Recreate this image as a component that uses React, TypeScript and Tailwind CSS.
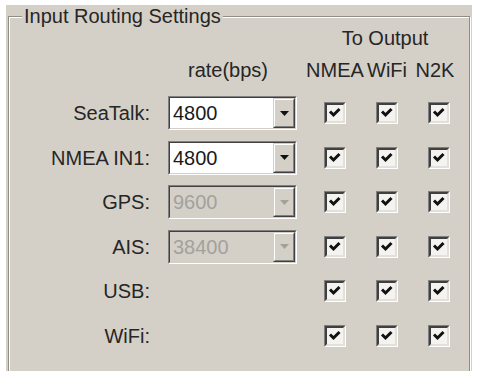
import React from 'react'

interface InputRow {
    name: string;
    rate?: string;
    enabled?: boolean;
}

const inputs: InputRow[] = [
    { name: 'SeaTalk:', rate: '4800', enabled: true },
    { name: 'NMEA IN1:', rate: '4800', enabled: true },
    { name: 'GPS:', rate: '9600', enabled: false },
    { name: 'AIS:', rate: '38400', enabled: false },
    { name: 'USB:' },
    { name: 'WiFi:' },
];

const CheckBox = () => (
    <div className="w-[22px] h-[22px] border border-t-[#808080] border-l-[#808080] border-b-white border-r-white">
        <div className="w-full h-full border-2 border-t-[#404040] border-l-[#404040] border-b-[#e2e0da] border-r-[#e2e0da] bg-[#f4f3f0] flex items-center justify-center">
            <svg width="16" height="16" viewBox="0 0 16 16">
                <polyline points="3,6.5 6.5,10 12.5,4" fill="none" stroke="#111" strokeWidth="3" strokeLinejoin="miter" />
            </svg>
        </div>
    </div>
);

const RateSelect = ({ value, enabled }: { value: string; enabled: boolean }) => (
    <div className="flex h-[34px] w-[129px] border border-t-[#808080] border-l-[#808080] border-b-white border-r-white">
        <div className={`flex flex-1 border border-t-[#404040] border-l-[#404040] border-b-[#d4d0c8] border-r-[#d4d0c8] ${enabled ? 'bg-white' : 'bg-[#d4d0c8]'}`}>
            <span className={`flex-1 pl-[3px] leading-[30px] ${enabled ? 'text-[#1a1a1a]' : 'text-[#a3a19c]'}`}>{value}</span>
            <div className="w-[22px] h-full border border-t-[#d4d0c8] border-l-[#d4d0c8] border-b-[#404040] border-r-[#404040]">
                <div className="w-full h-full border border-t-white border-l-white border-b-[#808080] border-r-[#808080] bg-[#d4d0c8] flex items-center justify-center">
                    <svg width="9" height="5" viewBox="0 0 9 5">
                        <polygon points="0,0 9,0 4.5,5" fill={enabled ? '#111' : '#a3a19c'} />
                    </svg>
                </div>
            </div>
        </div>
    </div>
);

const App = () => {
    return (
        <div className="w-[479px] h-[381px] bg-white pt-[5px] pl-[6px] font-['Liberation_Sans',Arial,sans-serif] text-[20px] text-[#262626]">
            <div className="w-[466px] h-[366px] bg-[#d4d0c8] overflow-hidden">
                <fieldset className="ml-[2px] w-[462px] h-[420px] border border-[#8f8d88] shadow-[inset_1px_1px_0_#fff,1px_1px_0_#fff]">
                    <legend className="ml-[13px] px-[2px] leading-[22px] bg-[#d4d0c8] whitespace-nowrap">Input Routing Settings</legend>

                    <div className="grid grid-cols-[159px_141px_52px_52px_52px] leading-[22px] whitespace-nowrap">
                        <div />
                        <div />
                        <div className="col-span-3 flex justify-center -ml-[4px]">To Output</div>
                    </div>
                    <div className="grid grid-cols-[159px_141px_52px_52px_52px] mt-[10px] leading-[22px] whitespace-nowrap">
                        <div />
                        <div className="pl-[20px]">rate(bps)</div>
                        <div className="flex justify-center">NMEA</div>
                        <div className="flex justify-center">WiFi</div>
                        <div className="flex justify-center -ml-[8px]">N2K</div>
                    </div>

                    <div className="grid grid-cols-[159px_141px_52px_52px_52px] auto-rows-[34px] gap-y-[10.6px] items-center mt-[15px] whitespace-nowrap">
                        {inputs.map((row) => (
                            <React.Fragment key={row.name}>
                                <div className="text-right pr-[18px]">{row.name}</div>
                                <div>
                                    {row.rate && <RateSelect value={row.rate} enabled={!!row.enabled} />}
                                </div>
                                <div className="flex justify-center"><CheckBox /></div>
                                <div className="flex justify-center"><CheckBox /></div>
                                <div className="flex justify-center"><CheckBox /></div>
                            </React.Fragment>
                        ))}
                    </div>
                </fieldset>
            </div>
        </div>
    )
}

export default App
